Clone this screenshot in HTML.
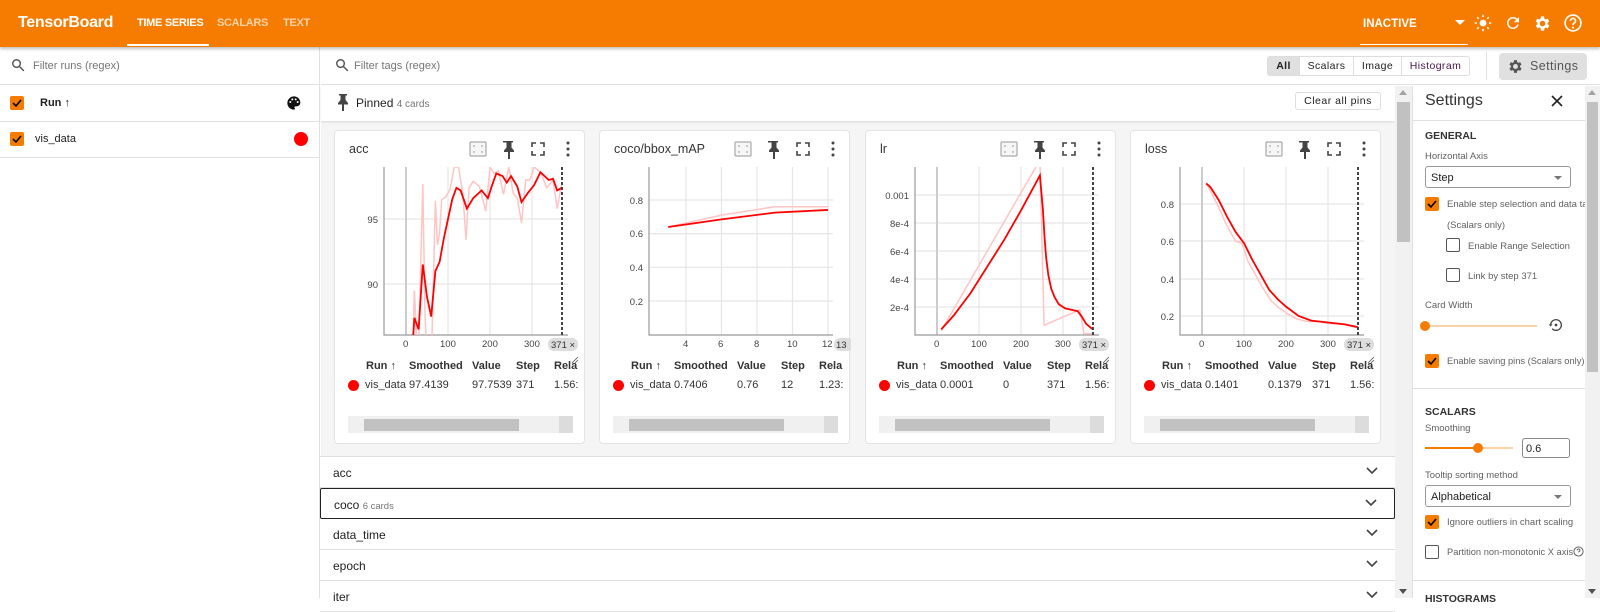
<!DOCTYPE html>
<html><head><meta charset="utf-8"><style>
*{box-sizing:border-box;margin:0;padding:0}
body{width:1600px;height:598px;overflow:hidden;position:relative;font-family:"Liberation Sans",Arial,sans-serif;color:#212121;background:#fff;font-size:12px}
.a{position:absolute}
.hdr{left:0;top:0;width:1600px;height:47px;background:#f57c00;color:#fff;box-shadow:0 2px 3px rgba(0,0,0,.25);z-index:2}
.cb{position:absolute;width:14px;height:14px;background:#f57c00;border-radius:2px}
.cb svg{position:absolute;left:1px;top:1px}
.ecb{position:absolute;width:14px;height:14px;border:1.5px solid #555;border-radius:2px;background:#fff}
.card{position:absolute;top:130px;width:251px;height:314px;background:#fff;border:1px solid #e4e4e4;border-radius:4px}
.card .t{position:absolute;left:14px;top:11px;font-size:12.5px;color:#333}
.th{position:absolute;top:229px;font-size:11px;font-weight:bold;color:#333}
.td{position:absolute;top:248px;font-size:11px;color:#333}
.row{position:absolute;left:320px;width:1075px;height:31px;background:#fff;border-bottom:1px solid #e0e0e0;font-size:12px}
.row span{position:absolute;left:13px;top:9px}
.row svg{position:absolute;right:17px;top:10px}
.set{font-size:9.5px;color:#616161}
.sel{position:absolute;border:1px solid #999;border-radius:3px;background:#fff;font-size:11px;color:#212121}
</style></head><body>

<div class="a hdr">
 <div class="a" style="left:18px;top:14px;font-size:16px;font-weight:bold;letter-spacing:-.3px">TensorBoard</div>
 <div class="a" style="left:137px;top:17px;font-size:11px;font-weight:bold;letter-spacing:-.3px">TIME SERIES</div>
 <div class="a" style="left:127px;top:44px;width:82px;height:2px;background:#fff"></div>
 <div class="a" style="left:217px;top:17px;font-size:11px;font-weight:bold;color:#fbd3a9;letter-spacing:-.3px">SCALARS</div>
 <div class="a" style="left:283px;top:17px;font-size:11px;font-weight:bold;color:#fbd3a9;letter-spacing:-.3px">TEXT</div>
 <div class="a" style="left:1363px;top:18px;font-size:11.5px;font-weight:bold">INACTIVE</div>
 <div class="a" style="left:1360px;top:44px;width:108px;height:1px;background:#fff"></div>
 <svg class="a" style="left:1455px;top:20px" width="10" height="6"><path d="M0 0h10L5 5z" fill="#fff"/></svg>
 <svg class="a" style="left:1474px;top:14px" width="18" height="18" viewBox="0 0 24 24"><circle cx="12" cy="12" r="4.5" fill="#fff"/><g stroke="#fff" stroke-width="2"><path d="M12 1v3M12 20v3M1 12h3M20 12h3M4.2 4.2l2.1 2.1M17.7 17.7l2.1 2.1M4.2 19.8l2.1-2.1M17.7 6.3l2.1-2.1"/></g></svg>
 <svg class="a" style="left:1504px;top:14px" width="18" height="18" viewBox="0 0 24 24"><path d="M17.65 6.35A7.95 7.95 0 0 0 12 4a8 8 0 1 0 7.73 10h-2.08A6 6 0 1 1 12 6c1.660 0 3.140.69 4.220 1.78L13 11h7V4z" fill="#fff"/></svg>
 <svg class="a" style="left:1533px;top:14px" width="19" height="19" viewBox="0 0 24 24"><path d="M19.4 13a7.5 7.5 0 0 0 0-2l2.1-1.6-2-3.5-2.5 1a7 7 0 0 0-1.7-1L15 3h-4l-.4 2.9a7 7 0 0 0-1.7 1l-2.5-1-2 3.5L6.6 11a7.5 7.5 0 0 0 0 2l-2.1 1.6 2 3.5 2.5-1a7 7 0 0 0 1.7 1L11 21h4l.4-2.9a7 7 0 0 0 1.7-1l2.5 1 2-3.5zM13 15.5a3.5 3.5 0 1 1 0-7 3.5 3.5 0 0 1 0 7z" fill="#fff" transform="translate(-1 0)"/></svg>
 <svg class="a" style="left:1563px;top:13px" width="20" height="20" viewBox="0 0 24 24"><circle cx="12" cy="12" r="9.5" fill="none" stroke="#fff" stroke-width="2"/><path d="M9 9.5a3 3 0 1 1 4.2 2.7c-.8.4-1.2 1-1.2 1.8v.5" fill="none" stroke="#fff" stroke-width="2"/><circle cx="12" cy="17.5" r="1.2" fill="#fff"/></svg>
</div>

<div class="a" style="left:0;top:47px;width:320px;height:551px;background:#fff;border-right:1px solid #e0e0e0"></div>
<svg class="a" style="left:11px;top:58px" width="14" height="14" viewBox="0 0 24 24"><circle cx="9.5" cy="9.5" r="6.5" fill="none" stroke="#555" stroke-width="2.5"/><path d="M14.5 14.5 22 22" stroke="#555" stroke-width="2.5"/></svg>
<div class="a" style="left:33px;top:60px;font-size:11px;color:#757575">Filter runs (regex)</div>
<div class="a" style="left:0;top:84px;width:320px;height:1px;background:#e0e0e0"></div>
<div class="cb" style="left:10px;top:96px"><svg width="12" height="12" viewBox="0 0 12 12"><path d="M2 6l3 3 5-6" stroke="#000" stroke-width="1.6" fill="none"/></svg></div>
<div class="a" style="left:40px;top:97px;font-size:11px;font-weight:bold">Run ↑</div>
<svg class="a" style="left:286px;top:95px" width="16" height="16" viewBox="0 0 24 24"><path d="M12 2C6.5 2 2 6.5 2 12s4.5 10 10 10c.9 0 1.5-.7 1.5-1.5 0-.4-.2-.8-.4-1-.3-.3-.4-.6-.4-1 0-.8.7-1.5 1.5-1.5H16c3.1 0 5.5-2.5 5.5-5.5C21.5 6 17.2 2 12 2zm-5.5 10a1.5 1.5 0 1 1 0-3 1.5 1.5 0 0 1 0 3zm3-4a1.5 1.5 0 1 1 0-3 1.5 1.5 0 0 1 0 3zm5 0a1.5 1.5 0 1 1 0-3 1.5 1.5 0 0 1 0 3zm3 4a1.5 1.5 0 1 1 0-3 1.5 1.5 0 0 1 0 3z" fill="#111"/></svg>
<div class="a" style="left:0;top:121px;width:320px;height:1px;background:#e0e0e0"></div>
<div class="cb" style="left:10px;top:132px"><svg width="12" height="12" viewBox="0 0 12 12"><path d="M2 6l3 3 5-6" stroke="#000" stroke-width="1.6" fill="none"/></svg></div>
<div class="a" style="left:35px;top:133px;font-size:11px">vis_data</div>
<div class="a" style="left:294px;top:132px;width:14px;height:14px;border-radius:50%;background:#f00"></div>
<div class="a" style="left:0;top:157px;width:320px;height:1px;background:#e0e0e0"></div>

<div class="a" style="left:321px;top:47px;width:1279px;height:38px;background:#fff;border-bottom:1px solid #e0e0e0"></div>
<svg class="a" style="left:335px;top:58px" width="14" height="14" viewBox="0 0 24 24"><circle cx="9.5" cy="9.5" r="6.5" fill="none" stroke="#555" stroke-width="2.5"/><path d="M14.5 14.5 22 22" stroke="#555" stroke-width="2.5"/></svg>
<div class="a" style="left:354px;top:60px;font-size:11px;color:#757575">Filter tags (regex)</div>
<div class="a" style="left:1267px;top:56px;width:203px;height:20px;border:1px solid #ddd;border-radius:3px;background:#fff;font-size:10.5px;letter-spacing:.4px">
 <div class="a" style="left:0;top:0;width:31px;height:18px;background:#e0e0e0;font-weight:bold;text-align:center;line-height:18px">All</div>
 <div class="a" style="left:31px;top:0;width:54px;height:18px;border-left:1px solid #ddd;text-align:center;line-height:18px">Scalars</div>
 <div class="a" style="left:85px;top:0;width:48px;height:18px;border-left:1px solid #ddd;text-align:center;line-height:18px">Image</div>
 <div class="a" style="left:133px;top:0;width:68px;height:18px;border-left:1px solid #ddd;text-align:center;line-height:18px;color:#4a154b">Histogram</div>
</div>
<div class="a" style="left:1486px;top:52px;width:1px;height:28px;background:#e0e0e0"></div>
<div class="a" style="left:1499px;top:53px;width:88px;height:27px;background:#e0e0e0;border-radius:4px"></div>
<svg class="a" style="left:1507px;top:58px" width="17" height="17" viewBox="0 0 24 24"><path d="M19.4 13a7.5 7.5 0 0 0 0-2l2.1-1.6-2-3.5-2.5 1a7 7 0 0 0-1.7-1L15 3h-4l-.4 2.9a7 7 0 0 0-1.7 1l-2.5-1-2 3.5L6.6 11a7.5 7.5 0 0 0 0 2l-2.1 1.6 2 3.5 2.5-1a7 7 0 0 0 1.7 1L11 21h4l.4-2.9a7 7 0 0 0 1.7-1l2.5 1 2-3.5zM13 15.5a3.5 3.5 0 1 1 0-7 3.5 3.5 0 0 1 0 7z" fill="#555" transform="translate(-1 0)"/></svg>
<div class="a" style="left:1530px;top:59px;font-size:12.5px;color:#555;letter-spacing:.4px">Settings</div>

<div class="a" style="left:321px;top:86px;width:1074px;height:512px;background:#f5f5f5"></div>
<div class="a" style="left:321px;top:86px;width:1074px;height:35px;background:#fff;box-shadow:0 1px 2px rgba(0,0,0,.12)"></div>
<svg class="a" style="left:336px;top:93px" width="14" height="18" viewBox="0 0 14 18"><path d="M3 1h8v1.5H9.5V7l2.5 3v1.5H8V18H6v-6.5H2V10l2.5-3V2.5H3z" fill="#444"/></svg>
<div class="a" style="left:356px;top:96px;font-size:12px">Pinned <span style="font-size:10px;color:#757575">4 cards</span></div>
<div class="a" style="left:1295px;top:92px;width:86px;height:18px;border:1px solid #ddd;border-radius:3px;background:#fff;font-size:10.5px;text-align:center;line-height:16px;letter-spacing:.5px">Clear all pins</div>

<div class="a" style="left:1395px;top:86px;width:17px;height:512px;background:#f1f1f1"></div>
<div class="a" style="left:1397px;top:102px;width:13px;height:140px;background:#c1c1c1"></div>
<svg class="a" style="left:1399px;top:90px" width="9" height="6"><path d="M0 5h8L4 0z" fill="#a3a3a3"/></svg>
<svg class="a" style="left:1399px;top:589px" width="9" height="6"><path d="M0 0h8L4 5z" fill="#505050"/></svg>

<div class="card" style="left:334px">
 <div class="t">acc</div>
 <svg class="a" style="left:0;top:0" width="251" height="314">
  <defs><clipPath id="c1"><rect x="49" y="36" width="184" height="168"/></clipPath></defs>
  <rect x="135" y="11" width="16" height="14" rx="1" fill="#f6f6f6" stroke="#aaa" stroke-width="1.2"/>
  <path d="M138 15h2M146 15h2M138 21h2M146 21h2" stroke="#999" stroke-width="1"/>
  <path d="M168 10h10v1.5h-1.5v5l2.5 3v1.5h-4v7h-2v-7h-4v-1.5l2.5-3v-5H168z" fill="#444"/>
  <path d="M197 16v-4h4M209 16v-4h-4M197 20v4h4M209 20v4h-4" stroke="#444" stroke-width="1.6" fill="none"/>
  <circle cx="233" cy="12" r="1.5" fill="#444"/><circle cx="233" cy="18" r="1.5" fill="#444"/><circle cx="233" cy="24" r="1.5" fill="#444"/>
  <g stroke="#e6e6e6" stroke-width="1.2"><path d="M113 36v168M155 36v168M197 36v168M49 88h184M49 153h184"/></g>
  <path d="M71 36v168" stroke="#ccc" stroke-width="2"/>
  <path d="M49 36v168h184" stroke="#999" stroke-width="1.2" fill="none"/>
  <g clip-path="url(#c1)" fill="none">
   <polyline vector-effect="non-scaling-stroke" transform="matrix(0.42 0 0 -13 71 1323)" stroke="#ffc4c4" stroke-width="1.5" points="15,84 20,89.5 25,86 30,85 40,97.7 45,88 50,84 55,83 62,86 70,96.4 75,93 80,94 85,96.5 95,96.7 105,97.3 115,99 125,99 135,97 143,93.4 150,97.4 160,97.9 175,97.5 190,95.6 200,99 210,98.5 220,98.7 232,96.9 245,99 255,97 265,96.6 275,94.7 285,98 295,98 305,99 320,98.6 335,97.4 350,98 360,95.8 371,97.75"/>
   <polyline vector-effect="non-scaling-stroke" transform="matrix(0.42 0 0 -13 71 1323)" stroke="#f00" stroke-width="1.8" points="15,85 20,87.4 30,86.5 40,91.5 50,89 60,87.5 70,91 80,91.7 90,93.5 100,95 110,96.5 120,97.4 130,97.2 145,95.8 160,96.6 180,97.2 195,96.6 205,97.6 215,98.5 230,98.3 240,97.8 250,98.3 265,97.5 275,96.3 290,97 305,97.6 320,98.6 340,98 350,98.1 360,97.2 371,97.4"/>
  </g>
  <path d="M227 36v168" stroke="#444" stroke-width="2" stroke-dasharray="3 2"/>
  <g font-size="9.5" fill="#444" font-family="Liberation Sans"><g text-anchor="end"><text x="43" y="92">95</text><text x="43" y="157">90</text></g>
  <text x="68" y="216">0</text><text x="105" y="216">100</text><text x="147" y="216">200</text><text x="189" y="216">300</text></g>
  <rect x="213" y="207" width="30" height="13" rx="6" fill="#ddd"/><text x="216" y="217" font-size="9.5" fill="#333" font-family="Liberation Sans">371 ×</text>
  <path d="M237 232l6-6M240 232l3-3" stroke="#555" stroke-width=".8"/>
 </svg>
 <div class="th" style="left:31px">Run ↑</div><div class="th" style="left:74px">Smoothed</div><div class="th" style="left:137px">Value</div><div class="th" style="left:181px">Step</div><div class="th" style="left:219px">Rela</div>
 <div class="a" style="left:13px;top:249px;width:11px;height:11px;border-radius:50%;background:#f00"></div>
 <div class="td" style="left:30px">vis_data</div><div class="td" style="left:74px">97.4139</div><div class="td" style="left:137px">97.7539</div><div class="td" style="left:181px">371</div><div class="td" style="left:219px">1.56:</div>
 <div class="a" style="left:13px;top:285px;width:225px;height:17px;background:#f0f0f0"></div>
 <div class="a" style="left:29px;top:288px;width:155px;height:12px;background:#c1c1c1"></div>
 <div class="a" style="left:224px;top:285px;width:14px;height:17px;background:#dcdcdc"></div>
</div>

<div class="card" style="left:599px">
 <div class="t">coco/bbox_mAP</div>
 <svg class="a" style="left:0;top:0" width="251" height="314">
  <defs><clipPath id="c2"><rect x="49" y="36" width="184" height="168"/></clipPath></defs>
  <rect x="135" y="11" width="16" height="14" rx="1" fill="#f6f6f6" stroke="#aaa" stroke-width="1.2"/>
  <path d="M138 15h2M146 15h2M138 21h2M146 21h2" stroke="#999" stroke-width="1"/>
  <path d="M168 10h10v1.5h-1.5v5l2.5 3v1.5h-4v7h-2v-7h-4v-1.5l2.5-3v-5H168z" fill="#444"/>
  <path d="M197 16v-4h4M209 16v-4h-4M197 20v4h4M209 20v4h-4" stroke="#444" stroke-width="1.6" fill="none"/>
  <circle cx="233" cy="12" r="1.5" fill="#444"/><circle cx="233" cy="18" r="1.5" fill="#444"/><circle cx="233" cy="24" r="1.5" fill="#444"/>
  <g stroke="#e6e6e6" stroke-width="1.2"><path d="M86 36v168M121.5 36v168M157 36v168M192.5 36v168M228 36v168M49 69h184M49 102.6h184M49 136.3h184M49 170h184"/></g>
  <path d="M49 36v168h184" stroke="#999" stroke-width="1.2" fill="none"/>
  <g clip-path="url(#c2)" fill="none">
   <polyline vector-effect="non-scaling-stroke" transform="matrix(17.75 0 0 -168.5 15 203.8)" stroke="#ffc4c4" stroke-width="1.5" points="3,0.64 6,0.71 9,0.76 12,0.76"/>
   <polyline vector-effect="non-scaling-stroke" transform="matrix(17.75 0 0 -168.5 15 203.8)" stroke="#f00" stroke-width="1.8" points="3,0.64 6,0.685 9,0.725 12,0.741"/>
  </g>
  <g font-size="9.5" fill="#444" font-family="Liberation Sans"><g text-anchor="end"><text x="43" y="73">0.8</text><text x="43" y="106">0.6</text><text x="43" y="140">0.4</text><text x="43" y="174">0.2</text></g>
  <text x="83" y="216">4</text><text x="118" y="216">6</text><text x="154" y="216">8</text><text x="187" y="216">10</text><text x="222" y="216">12</text></g>
  <rect x="234" y="207" width="20" height="13" rx="6" fill="#ddd"/><text x="236" y="217" font-size="9.5" fill="#333" font-family="Liberation Sans">13</text>
 </svg>
 <div class="th" style="left:31px">Run ↑</div><div class="th" style="left:74px">Smoothed</div><div class="th" style="left:137px">Value</div><div class="th" style="left:181px">Step</div><div class="th" style="left:219px">Rela</div>
 <div class="a" style="left:13px;top:249px;width:11px;height:11px;border-radius:50%;background:#f00"></div>
 <div class="td" style="left:30px">vis_data</div><div class="td" style="left:74px">0.7406</div><div class="td" style="left:137px">0.76</div><div class="td" style="left:181px">12</div><div class="td" style="left:219px">1.23:</div>
 <div class="a" style="left:13px;top:285px;width:225px;height:17px;background:#f0f0f0"></div>
 <div class="a" style="left:29px;top:288px;width:155px;height:12px;background:#c1c1c1"></div>
 <div class="a" style="left:224px;top:285px;width:14px;height:17px;background:#dcdcdc"></div>
</div>

<div class="card" style="left:865px">
 <div class="t">lr</div>
 <svg class="a" style="left:0;top:0" width="251" height="314">
  <defs><clipPath id="c3"><rect x="49" y="36" width="184" height="168"/></clipPath></defs>
  <rect x="135" y="11" width="16" height="14" rx="1" fill="#f6f6f6" stroke="#aaa" stroke-width="1.2"/>
  <path d="M138 15h2M146 15h2M138 21h2M146 21h2" stroke="#999" stroke-width="1"/>
  <path d="M168 10h10v1.5h-1.5v5l2.5 3v1.5h-4v7h-2v-7h-4v-1.5l2.5-3v-5H168z" fill="#444"/>
  <path d="M197 16v-4h4M209 16v-4h-4M197 20v4h4M209 20v4h-4" stroke="#444" stroke-width="1.6" fill="none"/>
  <circle cx="233" cy="12" r="1.5" fill="#444"/><circle cx="233" cy="18" r="1.5" fill="#444"/><circle cx="233" cy="24" r="1.5" fill="#444"/>
  <g stroke="#e6e6e6" stroke-width="1.2"><path d="M113 36v168M155 36v168M197 36v168M49 64h184M49 92h184M49 120h184M49 148h184M49 176h184"/></g>
  <path d="M71 36v168" stroke="#ccc" stroke-width="2"/>
  <path d="M49 36v168h184" stroke="#999" stroke-width="1.2" fill="none"/>
  <g clip-path="url(#c3)" fill="none">
   <polyline vector-effect="non-scaling-stroke" transform="matrix(0.42 0 0 -140000 71 204)" stroke="#ffc4c4" stroke-width="1.5" points="10,0.00003 245,0.00125 255,0.00007 340,0.00018 350,0.00001 371,0.00001"/>
   <polyline vector-effect="non-scaling-stroke" transform="matrix(0.42 0 0 -140000 71 204)" stroke="#f00" stroke-width="1.8" points="10,0.00004 40,0.00014 80,0.0003 120,0.00049 160,0.00068 200,0.00089 245,0.00114 252,0.0009 256,0.0007 260,0.00055 265,0.00043 272,0.00033 280,0.00027 290,0.00022 305,0.00019 320,0.00018 335,0.00017 345,0.00013 355,0.00008 371,0.00004"/>
  </g>
  <path d="M227 36v168" stroke="#444" stroke-width="2" stroke-dasharray="3 2"/>
  <g font-size="9.5" fill="#444" font-family="Liberation Sans"><g text-anchor="end"><text x="43" y="68">0.001</text><text x="43" y="96">8e-4</text><text x="43" y="124">6e-4</text><text x="43" y="152">4e-4</text><text x="43" y="180">2e-4</text></g>
  <text x="68" y="216">0</text><text x="105" y="216">100</text><text x="147" y="216">200</text><text x="189" y="216">300</text></g>
  <rect x="213" y="207" width="30" height="13" rx="6" fill="#ddd"/><text x="216" y="217" font-size="9.5" fill="#333" font-family="Liberation Sans">371 ×</text>
  <path d="M237 232l6-6M240 232l3-3" stroke="#555" stroke-width=".8"/>
 </svg>
 <div class="th" style="left:31px">Run ↑</div><div class="th" style="left:74px">Smoothed</div><div class="th" style="left:137px">Value</div><div class="th" style="left:181px">Step</div><div class="th" style="left:219px">Rela</div>
 <div class="a" style="left:13px;top:249px;width:11px;height:11px;border-radius:50%;background:#f00"></div>
 <div class="td" style="left:30px">vis_data</div><div class="td" style="left:74px">0.0001</div><div class="td" style="left:137px">0</div><div class="td" style="left:181px">371</div><div class="td" style="left:219px">1.56:</div>
 <div class="a" style="left:13px;top:285px;width:225px;height:17px;background:#f0f0f0"></div>
 <div class="a" style="left:29px;top:288px;width:155px;height:12px;background:#c1c1c1"></div>
 <div class="a" style="left:224px;top:285px;width:14px;height:17px;background:#dcdcdc"></div>
</div>

<div class="card" style="left:1130px">
 <div class="t">loss</div>
 <svg class="a" style="left:0;top:0" width="251" height="314">
  <defs><clipPath id="c4"><rect x="49" y="36" width="184" height="168"/></clipPath></defs>
  <rect x="135" y="11" width="16" height="14" rx="1" fill="#f6f6f6" stroke="#aaa" stroke-width="1.2"/>
  <path d="M138 15h2M146 15h2M138 21h2M146 21h2" stroke="#999" stroke-width="1"/>
  <path d="M168 10h10v1.5h-1.5v5l2.5 3v1.5h-4v7h-2v-7h-4v-1.5l2.5-3v-5H168z" fill="#444"/>
  <path d="M197 16v-4h4M209 16v-4h-4M197 20v4h4M209 20v4h-4" stroke="#444" stroke-width="1.6" fill="none"/>
  <circle cx="233" cy="12" r="1.5" fill="#444"/><circle cx="233" cy="18" r="1.5" fill="#444"/><circle cx="233" cy="24" r="1.5" fill="#444"/>
  <g stroke="#e6e6e6" stroke-width="1.2"><path d="M113 36v168M155 36v168M197 36v168M49 73h184M49 110h184M49 148h184M49 185h184"/></g>
  <path d="M71 36v168" stroke="#ccc" stroke-width="2"/>
  <path d="M49 36v168h184" stroke="#999" stroke-width="1.2" fill="none"/>
  <g clip-path="url(#c4)" fill="none">
   <polyline vector-effect="non-scaling-stroke" transform="matrix(0.42 0 0 -186.7 71 222.3)" stroke="#ffc4c4" stroke-width="1.5" points="10,0.91 20,0.87 40,0.78 60,0.68 80,0.6 95,0.59 110,0.49 125,0.43 145,0.35 165,0.28 185,0.24 205,0.21 225,0.185 250,0.17 280,0.17 300,0.16 340,0.155 371,0.135"/>
   <polyline vector-effect="non-scaling-stroke" transform="matrix(0.42 0 0 -186.7 71 222.3)" stroke="#f00" stroke-width="1.8" points="10,0.91 20,0.89 40,0.82 60,0.73 80,0.65 100,0.59 120,0.5 140,0.42 160,0.34 180,0.29 200,0.25 230,0.2 260,0.175 300,0.165 340,0.155 371,0.14"/>
  </g>
  <path d="M227 36v168" stroke="#444" stroke-width="2" stroke-dasharray="3 2"/>
  <g font-size="9.5" fill="#444" font-family="Liberation Sans"><g text-anchor="end"><text x="43" y="77">0.8</text><text x="43" y="114">0.6</text><text x="43" y="152">0.4</text><text x="43" y="189">0.2</text></g>
  <text x="68" y="216">0</text><text x="105" y="216">100</text><text x="147" y="216">200</text><text x="189" y="216">300</text></g>
  <rect x="213" y="207" width="30" height="13" rx="6" fill="#ddd"/><text x="216" y="217" font-size="9.5" fill="#333" font-family="Liberation Sans">371 ×</text>
  <path d="M237 232l6-6M240 232l3-3" stroke="#555" stroke-width=".8"/>
 </svg>
 <div class="th" style="left:31px">Run ↑</div><div class="th" style="left:74px">Smoothed</div><div class="th" style="left:137px">Value</div><div class="th" style="left:181px">Step</div><div class="th" style="left:219px">Rela</div>
 <div class="a" style="left:13px;top:249px;width:11px;height:11px;border-radius:50%;background:#f00"></div>
 <div class="td" style="left:30px">vis_data</div><div class="td" style="left:74px">0.1401</div><div class="td" style="left:137px">0.1379</div><div class="td" style="left:181px">371</div><div class="td" style="left:219px">1.56:</div>
 <div class="a" style="left:13px;top:285px;width:225px;height:17px;background:#f0f0f0"></div>
 <div class="a" style="left:29px;top:288px;width:155px;height:12px;background:#c1c1c1"></div>
 <div class="a" style="left:224px;top:285px;width:14px;height:17px;background:#dcdcdc"></div>
</div>

<div class="a" style="left:320px;top:456px;width:1075px;height:1px;background:#ddd"></div>
<div class="row" style="top:457px"><span>acc</span><svg width="12" height="8"><path d="M1 1l5 5 5-5" stroke="#444" stroke-width="1.6" fill="none"/></svg></div>
<div class="row" style="top:488px;border:1px solid #222;border-radius:2px"><span>coco <span style="position:static;font-size:9.5px;color:#757575">6 cards</span></span><svg width="12" height="8"><path d="M1 1l5 5 5-5" stroke="#444" stroke-width="1.6" fill="none"/></svg></div>
<div class="row" style="top:519px"><span>data_time</span><svg width="12" height="8"><path d="M1 1l5 5 5-5" stroke="#444" stroke-width="1.6" fill="none"/></svg></div>
<div class="row" style="top:550px"><span>epoch</span><svg width="12" height="8"><path d="M1 1l5 5 5-5" stroke="#444" stroke-width="1.6" fill="none"/></svg></div>
<div class="row" style="top:581px"><span>iter</span><svg width="12" height="8"><path d="M1 1l5 5 5-5" stroke="#444" stroke-width="1.6" fill="none"/></svg></div>

<div class="a" style="left:1412px;top:86px;width:173px;height:512px;background:#fff;border-left:1px solid #e0e0e0"></div>
<div class="a" style="left:1425px;top:92px;font-size:16px;color:#333">Settings</div>
<svg class="a" style="left:1551px;top:95px" width="12" height="12"><path d="M1 1l10 10M11 1L1 11" stroke="#222" stroke-width="1.6"/></svg>
<div class="a" style="left:1412px;top:120px;width:173px;height:1px;background:#e0e0e0"></div>
<div class="a" style="left:1425px;top:130px;font-size:10.5px;font-weight:bold;color:#333">GENERAL</div>
<div class="a set" style="left:1425px;top:151px">Horizontal Axis</div>
<div class="sel" style="left:1425px;top:166px;width:146px;height:22px"><span class="a" style="left:5px;top:5px">Step</span><svg class="a" style="right:8px;top:9px" width="8" height="5"><path d="M0 0h8L4 4z" fill="#777"/></svg></div>
<div class="cb" style="left:1425px;top:197px"><svg width="12" height="12" viewBox="0 0 12 12"><path d="M2 6l3 3 5-6" stroke="#000" stroke-width="1.6" fill="none"/></svg></div>
<div class="a set" style="left:1447px;top:199px;white-space:nowrap;width:138px;overflow:hidden">Enable step selection and data table</div>
<div class="a set" style="left:1447px;top:220px">(Scalars only)</div>
<div class="ecb" style="left:1446px;top:238px"></div>
<div class="a set" style="left:1468px;top:241px">Enable Range Selection</div>
<div class="ecb" style="left:1446px;top:268px"></div>
<div class="a set" style="left:1468px;top:271px">Link by step 371</div>
<div class="a set" style="left:1425px;top:300px">Card Width</div>
<div class="a" style="left:1426px;top:325px;width:111px;height:2px;background:#fbd3a9"></div>
<div class="a" style="left:1420px;top:321px;width:10px;height:10px;border-radius:50%;background:#f57c00"></div>
<svg class="a" style="left:1548px;top:317px" width="16" height="16" viewBox="0 0 24 24"><path d="M4 12a8 8 0 1 1 2.3 5.6" fill="none" stroke="#444" stroke-width="2"/><path d="M1 11l3 3 3-3z" fill="#444"/><circle cx="12" cy="12" r="2" fill="#444"/></svg>
<div class="cb" style="left:1425px;top:354px"><svg width="12" height="12" viewBox="0 0 12 12"><path d="M2 6l3 3 5-6" stroke="#000" stroke-width="1.6" fill="none"/></svg></div>
<div class="a set" style="left:1447px;top:356px;white-space:nowrap;font-size:9.3px">Enable saving pins (Scalars only)</div>
<div class="a" style="left:1412px;top:388px;width:173px;height:1px;background:#e0e0e0"></div>
<div class="a" style="left:1425px;top:406px;font-size:10.5px;font-weight:bold;color:#333">SCALARS</div>
<div class="a set" style="left:1425px;top:423px">Smoothing</div>
<div class="a" style="left:1425px;top:447px;width:88px;height:2px;background:#fbd3a9"></div>
<div class="a" style="left:1425px;top:447px;width:52px;height:2px;background:#f57c00"></div>
<div class="a" style="left:1473px;top:443px;width:10px;height:10px;border-radius:50%;background:#f57c00"></div>
<div class="sel" style="left:1522px;top:438px;width:48px;height:20px;border-color:#888"><span class="a" style="left:3px;top:4px">0.6</span></div>
<div class="a set" style="left:1425px;top:470px">Tooltip sorting method</div>
<div class="sel" style="left:1425px;top:485px;width:146px;height:22px"><span class="a" style="left:5px;top:5px">Alphabetical</span><svg class="a" style="right:8px;top:9px" width="8" height="5"><path d="M0 0h8L4 4z" fill="#777"/></svg></div>
<div class="cb" style="left:1425px;top:515px"><svg width="12" height="12" viewBox="0 0 12 12"><path d="M2 6l3 3 5-6" stroke="#000" stroke-width="1.6" fill="none"/></svg></div>
<div class="a set" style="left:1447px;top:517px">Ignore outliers in chart scaling</div>
<div class="ecb" style="left:1425px;top:545px"></div>
<div class="a set" style="left:1447px;top:547px;font-size:9.3px;white-space:nowrap">Partition non-monotonic X axis</div>
<svg class="a" style="left:1573px;top:546px" width="11" height="11" viewBox="0 0 24 24"><circle cx="12" cy="12" r="10" fill="none" stroke="#555" stroke-width="2"/><path d="M9 9.5a3 3 0 1 1 4 2.8c-.7.3-1 .9-1 1.7" fill="none" stroke="#555" stroke-width="2"/></svg>
<div class="a" style="left:1412px;top:580px;width:173px;height:1px;background:#e0e0e0"></div>
<div class="a" style="left:1425px;top:593px;font-size:10.5px;font-weight:bold;color:#333">HISTOGRAMS</div>
<div class="a" style="left:1585px;top:86px;width:15px;height:512px;background:#f1f1f1"></div>
<div class="a" style="left:1587px;top:102px;width:11px;height:270px;background:#c1c1c1"></div>
<svg class="a" style="left:1588px;top:90px" width="9" height="6"><path d="M0 5h8L4 0z" fill="#a3a3a3"/></svg>
<svg class="a" style="left:1588px;top:589px" width="9" height="6"><path d="M0 0h8L4 5z" fill="#505050"/></svg>
</body></html>
